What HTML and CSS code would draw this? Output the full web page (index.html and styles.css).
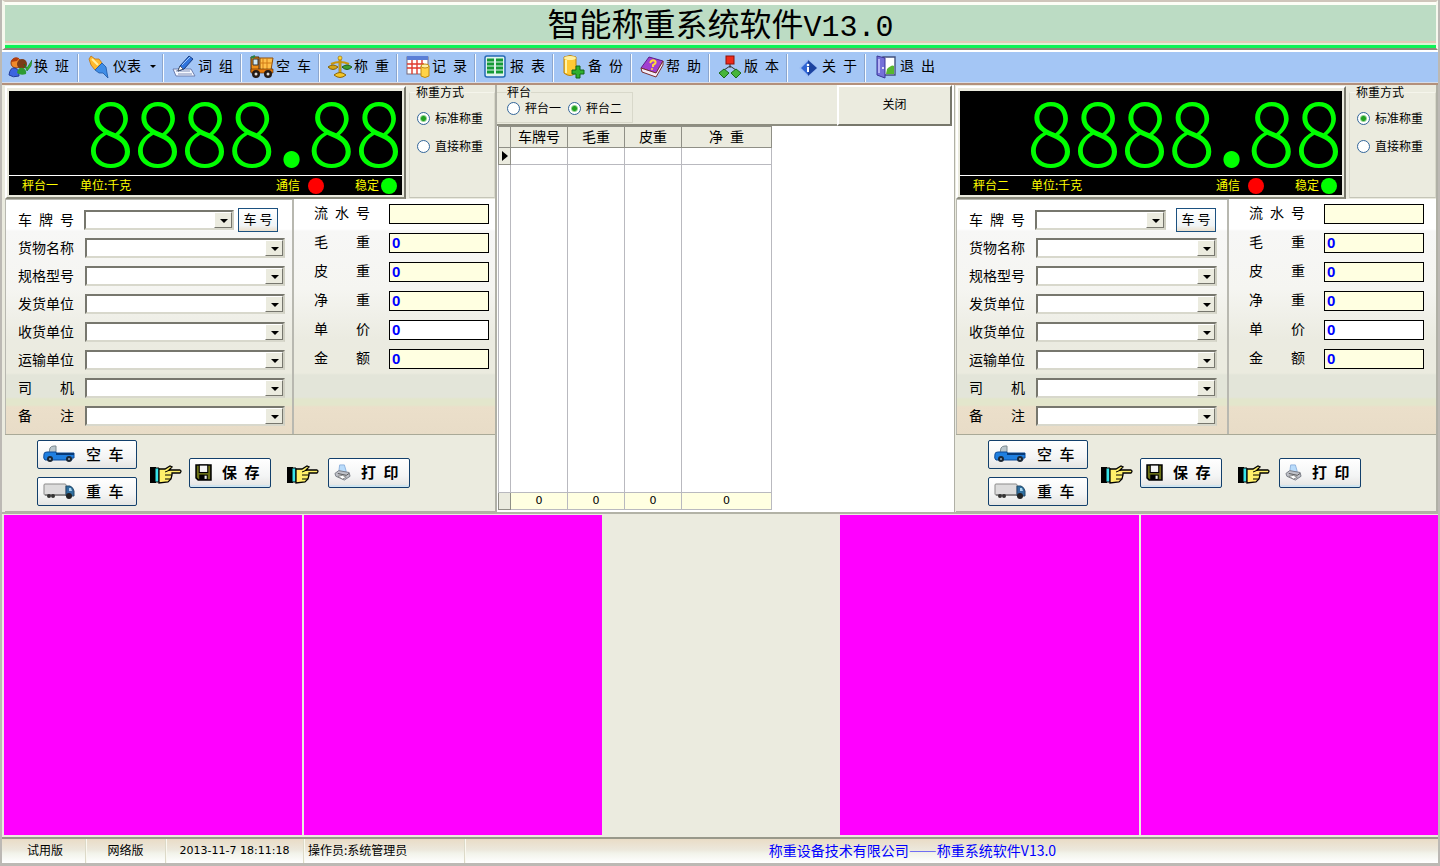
FILE: index.html
```html
<!DOCTYPE html>
<html lang="zh-CN">
<head>
<meta charset="utf-8">
<title>智能称重系统软件V13.0</title>
<link rel="stylesheet" href="styles.css">
</head>
<body>
<svg class="defs" aria-hidden="true">
  <symbol id="pickup" viewBox="0 0 32 18">
    <path d="M6 8L7 3Q8 1 11 1H13V9H6z" fill="#b9c6cc" stroke="#7d8a90"/>
    <path d="M1 9Q1 7 4 7H13V8H31V13H29V15H2Q0 14 1 9z" fill="#1f7fe0" stroke="#0d4a98"/>
    <path d="M13 9H31" stroke="#073a78" stroke-width="2"/>
    <circle cx="7" cy="14" r="3" fill="#1c2733"/><circle cx="7" cy="14" r="1" fill="#9ab"/>
    <circle cx="26" cy="14" r="3" fill="#1c2733"/><circle cx="26" cy="14" r="1" fill="#9ab"/>
  </symbol>
  <symbol id="truck" viewBox="0 0 32 18">
    <rect x="1" y="2" width="22" height="11" rx="1" fill="#dcdcdc" stroke="#8b8b8b"/>
    <path d="M2 12H23V14H2z" fill="#8a8a8a"/>
    <path d="M23 4H27Q30 5 31 9V14H23z" fill="#2f6fa0" stroke="#244a68"/>
    <path d="M26 6H28L29 9H26z" fill="#a9d6ee"/>
    <circle cx="6" cy="14" r="2" fill="#333"/><circle cx="10" cy="14" r="2" fill="#333"/><circle cx="26" cy="14" r="3" fill="#222"/>
  </symbol>
  <symbol id="hand" viewBox="0 0 34 24">
    <path d="M1 6H7V22H1z" fill="#000"/>
    <path d="M6 7H10V21H6z" fill="#38e4ea" stroke="#000"/>
    <path d="M10 8L16 8L21 5L23 6L20 9H31Q33 10 31 12H23L23 14L22 18L19 21L10 22z" fill="#fff06a" stroke="#000" stroke-width="1.3"/>
    <path d="M16 11L21 9M16 14H23M16 18H22" fill="none" stroke="#000"/>
  </symbol>
  <symbol id="disk" viewBox="0 0 16 16">
    <path d="M1 1H15V15H3L1 13z" fill="#6d7217" stroke="#000" stroke-width="1.5"/>
    <rect x="4" y="1" width="8" height="7" fill="#f4f4f4" stroke="#000"/>
    <rect x="4" y="10" width="8" height="5" fill="#000"/><rect x="9" y="11" width="2" height="3" fill="#eee"/>
  </symbol>
  <symbol id="printer" viewBox="0 0 18 18">
    <path d="M5 9L6 1H11L13 8z" fill="#b9dcfb" stroke="#8db1dd"/>
    <path d="M1 10L5 7L16 9L17 13L11 17L2 13z" fill="#bfc1c8" stroke="#777b85"/>
    <path d="M4 10L13 12L16 10" fill="none" stroke="#555"/>
    <path d="M4 13L9 12L13 14L9 16z" fill="#fff" stroke="#888"/>
  </symbol>
</svg>

<header class="banner"><h1>智能称重系统软件<span>V13.0</span></h1></header>

<nav class="toolbar">
  <button class="tool first"><svg viewBox="0 0 24 24"><circle cx="8" cy="8" r="5" fill="#f08a2c" stroke="#9c3f0c"/><path d="M3 7Q5 1 11 3L9 6z" fill="#b23c10"/><circle cx="14" cy="9" r="5" fill="#7a3c19"/><path d="M1 20Q2 12 7 13Q11 14 11 21Q5 23 1 20z" fill="#3c65e0" stroke="#223c9a"/><path d="M9 18Q10 12 15 13Q19 15 18 19Q13 21 9 18z" fill="#2f9b32"/><path d="M16 9L19 13L24 5L23 11L19 16z" fill="#35b52e" stroke="#136d15" stroke-width=".6"/></svg><span>换&ensp;班</span></button>
  <button class="tool wide"><svg viewBox="0 0 24 24"><path d="M2 4L4 1L8 4L12 4L15 8L8 15L4 10z" fill="#ffb92b" stroke="#bd7210" stroke-width=".8"/><path d="M15 8L8 15L12 18L16 18L21 23L20 18L19 12z" fill="#3f8de6" stroke="#1c56a3" stroke-width=".8"/><path d="M5 4L11 10" stroke="#fff0a0" stroke-width="2"/></svg><span>仪表</span><i class="drop"></i></button>
  <button class="tool"><svg viewBox="0 0 24 24"><path d="M1 14H19L23 21H4z" fill="#f5f8ff" stroke="#6d7fae"/><path d="M4 16H18M6 19H20" stroke="#7f8fb8"/><path d="M6 16L8 11L17 1L21 4L12 14z" fill="#2f74dd" stroke="#153b83"/><path d="M6 16L8 11L11 14z" fill="#fff" stroke="#333" stroke-width=".6"/><path d="M10 10L18 2" stroke="#9cc9ff"/></svg><span>词&ensp;组</span></button>
  <button class="tool"><svg viewBox="0 0 24 24"><path d="M1 2H9V17H1z" fill="#ef8d16" stroke="#4a2400"/><path d="M3 4H8V10H3z" fill="#cfe6f0" stroke="#333"/><path d="M1 3L5 1" stroke="#27824a" stroke-width="2"/><path d="M10 3H23L21 15H10z" fill="#ffc04a" stroke="#8d4b08"/><path d="M13 3V14M17 3V14M10 8H22" stroke="#d07b17"/><path d="M1 14H23V18H1z" fill="#e87d0c" stroke="#4a2400" stroke-width=".6"/><circle cx="6" cy="19" r="4" fill="#251b16"/><circle cx="6" cy="19" r="1.5" fill="#ddd"/><circle cx="18" cy="19" r="4" fill="#251b16"/><circle cx="18" cy="19" r="1.5" fill="#ddd"/></svg><span>空&ensp;车</span></button>
  <button class="tool"><svg viewBox="0 0 24 24"><path d="M11 2H13V18H11z" fill="#e9b514" stroke="#8d6706" stroke-width=".7"/><circle cx="12" cy="3" r="2" fill="#ffd735" stroke="#8d6706" stroke-width=".6"/><path d="M3 9Q12 5 21 9" fill="none" stroke="#c8950b" stroke-width="2"/><path d="M0 12Q5 8 10 12Q5 17 0 12z" fill="#d7a514" stroke="#80620d"/><path d="M14 12Q19 8 24 12Q19 17 14 12z" fill="#3f9c2e" stroke="#1e5d18"/><path d="M6 20Q12 15 18 20Q12 25 6 20z" fill="#f4c526" stroke="#8d6706"/></svg><span>称&ensp;重</span></button>
  <button class="tool"><svg viewBox="0 0 24 24"><rect x="1" y="2" width="21" height="17" fill="#fff" stroke="#7a6a78"/><rect x="1" y="1" width="21" height="4" fill="#5a7ed6"/><path d="M1 9H18M1 13H18M6 5V19M11 5V19M16 5V19" stroke="#e03a2e" stroke-width="1.4"/><path d="M15 11H23V21Q19 24 15 21z" fill="#ffd348" stroke="#c28a10"/><ellipse cx="19" cy="11" rx="4" ry="2" fill="#fff0a6" stroke="#c28a10"/></svg><span>记&ensp;录</span></button>
  <button class="tool"><svg viewBox="0 0 24 24"><rect x="1" y="1" width="20" height="21" rx="2" fill="#dff3ee" stroke="#2469b4" stroke-width="1.5"/><path d="M3 5H10M3 9H10M3 13H10M3 17H10M12 5H19M12 9H19M12 13H19M12 17H19" stroke="#149a35" stroke-width="2.8"/></svg><span>报&ensp;表</span></button>
  <button class="tool"><svg viewBox="0 0 24 24"><path d="M2 2Q8 -1 14 2V18Q8 23 2 18z" fill="#ffc934" stroke="#b9800c"/><ellipse cx="8" cy="3" rx="6" ry="2" fill="#fff0a0"/><path d="M4 5V18" stroke="#fff3a8" stroke-width="2"/><path d="M14 11H18V15H22V19H18V23H14V19H10V15H14z" fill="#2fb02e" stroke="#126716"/></svg><span>备&ensp;份</span></button>
  <button class="tool"><svg viewBox="0 0 24 24"><path d="M9 2L23 6L16 18L1 13z" fill="#a13fd0" stroke="#5c1d86"/><path d="M1 13L16 18L23 6V10L16 22L2 17z" fill="#f3edf8" stroke="#7a2e2e"/><path d="M10 8Q12 4 15 6Q17 8 13 10V12" fill="none" stroke="#ffd93a" stroke-width="2"/><circle cx="12" cy="14" r="1" fill="#ffd93a"/></svg><span>帮&ensp;助</span></button>
  <button class="tool"><svg viewBox="0 0 24 24"><path d="M12 9V13M12 11L6 15M12 11L18 15" stroke="#333"/><rect x="8" y="1" width="8" height="8" fill="#ee2a1b" stroke="#8d110b"/><path d="M1 18L6 14L11 18L6 23z" fill="#46b53a" stroke="#1c6a18"/><path d="M13 18L18 14L23 18L18 23z" fill="#46b53a" stroke="#1c6a18"/></svg><span>版&ensp;本</span></button>
  <button class="tool"><svg viewBox="0 0 24 24"><path d="M4 13L12 5L21 13L12 21z" fill="#2f65d4" stroke="#9dbdf3" stroke-width="1.5"/><path d="M12 5L21 13L12 21z" fill="#1b429f"/><circle cx="12" cy="10" r="1.3" fill="#fff"/><path d="M12 12V17" stroke="#fff" stroke-width="2"/></svg><span>关&ensp;于</span></button>
  <button class="tool last"><svg viewBox="0 0 24 24"><path d="M9 2H21V20H9z" fill="#fff" stroke="#40507d" stroke-width="1.4"/><path d="M13 14Q18 9 20 11V19H12z" fill="#57b82e"/><path d="M3 1L11 3V23L3 20z" fill="#7570d8" stroke="#3b3697"/><path d="M5 4V18" stroke="#b6b4f5" stroke-width="2"/><circle cx="9" cy="13" r="1" fill="#fff"/></svg><span>退&ensp;出</span></button>
</nav>

<main class="work">
  <section class="station one">
    <div class="top">
      <div class="display">
        <div class="digits">8888<b>.</b>88</div>
        <div class="strip"><span>秤台一</span><span>单位:千克</span><span class="comm">通信</span><i class="lamp red"></i><span class="stable">稳定</span><i class="lamp"></i></div>
      </div>
      <fieldset class="mode"><legend>称重方式</legend>
        <label><input type="radio" name="mode1" checked>标准称重</label>
        <label><input type="radio" name="mode1">直接称重</label>
      </fieldset>
    </div>
    <div class="form">
      <div class="fields">
        <div class="row plate"><label for="a1">车 牌 号</label><span class="combo"><select id="a1"></select></span><button class="mini">车 号</button></div>
        <div class="row"><label for="a2">货物名称</label><span class="combo"><select id="a2"></select></span></div>
        <div class="row"><label for="a3">规格型号</label><span class="combo"><select id="a3"></select></span></div>
        <div class="row"><label for="a4">发货单位</label><span class="combo"><select id="a4"></select></span></div>
        <div class="row"><label for="a5">收货单位</label><span class="combo"><select id="a5"></select></span></div>
        <div class="row"><label for="a6">运输单位</label><span class="combo"><select id="a6"></select></span></div>
        <div class="row"><label for="a7">司 机</label><span class="combo"><select id="a7"></select></span></div>
        <div class="row"><label for="a8">备 注</label><span class="combo"><select id="a8"></select></span></div>
      </div>
      <div class="values">
        <div class="row"><label for="v1">流 水 号</label><input id="v1" type="text"></div>
        <div class="row"><label for="v2">毛 重</label><input id="v2" type="text" value="0"></div>
        <div class="row"><label for="v3">皮 重</label><input id="v3" type="text" value="0"></div>
        <div class="row"><label for="v4">净 重</label><input id="v4" type="text" value="0"></div>
        <div class="row"><label for="v5">单 价</label><input id="v5" class="plain" type="text" value="0"></div>
        <div class="row"><label for="v6">金 额</label><input id="v6" type="text" value="0"></div>
      </div>
    </div>
    <div class="actions">
      <div class="trucks">
        <button class="btn"><svg class="car"><use href="#pickup"/></svg>空&ensp;车</button>
        <button class="btn"><svg class="car"><use href="#truck"/></svg>重&ensp;车</button>
      </div>
      <svg class="hand"><use href="#hand"/></svg>
      <button class="btn bold"><svg class="ico"><use href="#disk"/></svg>保&ensp;存</button>
      <svg class="hand second"><use href="#hand"/></svg>
      <button class="btn bold"><svg class="ico"><use href="#printer"/></svg>打&ensp;印</button>
    </div>
  </section>

  <section class="list">
    <div class="listbar">
      <fieldset class="pick"><legend>秤台</legend>
        <label><input type="radio" name="scale">秤台一</label>
        <label><input type="radio" name="scale" checked>秤台二</label>
      </fieldset>
      <button class="close">关闭</button>
    </div>
    <div class="sheet">
      <table>
        <colgroup><col class="mark"><col class="narrow"><col class="narrow"><col class="narrow"><col class="net"></colgroup>
        <thead><tr><th></th><th>车牌号</th><th>毛重</th><th>皮重</th><th>净&ensp;重</th></tr></thead>
        <tbody>
          <tr class="current"><th><i class="pointer"></i></th><td></td><td></td><td></td><td></td></tr>
          <tr class="rest"><td></td><td></td><td></td><td></td><td></td></tr>
        </tbody>
        <tfoot><tr><th></th><td>0</td><td>0</td><td>0</td><td>0</td></tr></tfoot>
      </table>
    </div>
  </section>

  <section class="station two">
    <div class="top">
      <div class="display">
        <div class="digits">8888<b>.</b>88</div>
        <div class="strip"><span>秤台二</span><span>单位:千克</span><span class="comm">通信</span><i class="lamp red"></i><span class="stable">稳定</span><i class="lamp"></i></div>
      </div>
      <fieldset class="mode"><legend>称重方式</legend>
        <label><input type="radio" name="mode2" checked>标准称重</label>
        <label><input type="radio" name="mode2">直接称重</label>
      </fieldset>
    </div>
    <div class="form">
      <div class="fields">
        <div class="row plate"><label for="b1">车 牌 号</label><span class="combo"><select id="b1"></select></span><button class="mini">车 号</button></div>
        <div class="row"><label for="b2">货物名称</label><span class="combo"><select id="b2"></select></span></div>
        <div class="row"><label for="b3">规格型号</label><span class="combo"><select id="b3"></select></span></div>
        <div class="row"><label for="b4">发货单位</label><span class="combo"><select id="b4"></select></span></div>
        <div class="row"><label for="b5">收货单位</label><span class="combo"><select id="b5"></select></span></div>
        <div class="row"><label for="b6">运输单位</label><span class="combo"><select id="b6"></select></span></div>
        <div class="row"><label for="b7">司 机</label><span class="combo"><select id="b7"></select></span></div>
        <div class="row"><label for="b8">备 注</label><span class="combo"><select id="b8"></select></span></div>
      </div>
      <div class="values">
        <div class="row"><label for="w1">流 水 号</label><input id="w1" type="text"></div>
        <div class="row"><label for="w2">毛 重</label><input id="w2" type="text" value="0"></div>
        <div class="row"><label for="w3">皮 重</label><input id="w3" type="text" value="0"></div>
        <div class="row"><label for="w4">净 重</label><input id="w4" type="text" value="0"></div>
        <div class="row"><label for="w5">单 价</label><input id="w5" class="plain" type="text" value="0"></div>
        <div class="row"><label for="w6">金 额</label><input id="w6" type="text" value="0"></div>
      </div>
    </div>
    <div class="actions">
      <div class="trucks">
        <button class="btn"><svg class="car"><use href="#pickup"/></svg>空&ensp;车</button>
        <button class="btn"><svg class="car"><use href="#truck"/></svg>重&ensp;车</button>
      </div>
      <svg class="hand"><use href="#hand"/></svg>
      <button class="btn bold"><svg class="ico"><use href="#disk"/></svg>保&ensp;存</button>
      <svg class="hand second"><use href="#hand"/></svg>
      <button class="btn bold"><svg class="ico"><use href="#printer"/></svg>打&ensp;印</button>
    </div>
  </section>
</main>

<section class="cameras">
  <div class="video"></div><div class="video"></div><div class="gap"></div><div class="video"></div><div class="video"></div>
</section>

<footer class="status">
  <span class="s1">试用版</span><span class="s2">网络版</span><span class="s3">2013-11-7 18:11:18</span><span class="s4">操作员:系统管理员</span><span class="s5">称重设备技术有限公司——称重系统软件V13.0</span>
</footer>
</body>
</html>
```
FILE: styles.css
```css
* { box-sizing: border-box; }
body {
  margin: 0;
  min-height: 100vh;
  display: flex;
  flex-direction: column;
  background: #ebebdf;
  border: solid #bcb9b4;
  border-width: 0 2px 3px 2px;
  font: 14px/20px "Noto Sans CJK SC", sans-serif;
  color: #000;
}
button, input, select { font: inherit; color: inherit; margin: 0; padding: 0; border-radius: 0; }
fieldset { margin: 0; padding: 0; min-width: 0; }
.defs { display: none; }

.banner {
  height: 50px;
  border-top: 2px solid #cfc6bb;
  border-bottom: 2px solid #8c8878;
  background: linear-gradient(#fdfef6 3px, #bcdcc4 3px, #bcdcc4 39px, #e3c9b8 39px, #e3c9b8 41px, #d9f5d4 41px, #d9f5d4 43px, #0df356 43px);
  border-left: 3px solid #f6f8ee;
  border-right: 2px solid #f6f8ee;
  flex: none;
}
.banner h1 {
  margin: 0;
  font-size: 32px;
  line-height: 40px;
  font-weight: 400;
  text-align: center;
}
.banner h1 span { font-family: "Liberation Mono", monospace; font-size: 30px; }

.toolbar {
  display: flex;
  height: 35px;
  flex: none;
  padding: 2px 0 0 1px;
  background: #a4c6f5;
  border-top: 2px solid #fff;
  border-bottom: 2px solid #b3907b;
  box-shadow: inset 0 -1px #d5dcea;
}
.tool {
  display: flex;
  align-items: center;
  width: 78px;
  height: 28px;
  padding: 0 0 3px 8px;
  border: 0;
  border-right: 1px solid #f7fbff;
  box-shadow: inset -1px 0 #8ca6cd;
  background: none;
  white-space: nowrap;
}
.tool span { padding-bottom: 4px; }
.tool svg { width: 24px; height: 24px; margin-right: 2px; flex: none; }
.tool.first { width: 76px; padding-left: 5px; }
.tool.wide { width: 85px; }
.tool.last { border: 0; box-shadow: none; }
.drop { border: 3px solid transparent; border-top-color: #000; border-bottom: 0; margin-left: 9px; }

.work { display: grid; grid-template-columns: minmax(0, 495fr) minmax(0, 457fr) minmax(0, 484fr); }
.station { padding-left: 3px; border-right: 2px solid #b0b0a6; display: flex; flex-direction: column; }
.station.two { border-left: 1px solid #b0b0a6; padding-left: 1px; }
.top { display: flex; height: 114px; }
.display {
  flex: 1;
  padding: 3px 2px 2px;
  margin-top: 1px;
  margin-right: 3px;
  border: 2px solid;
  border-color: #fff #77776b #8b8b7d #fff;
}
.digits {
  height: 84px;
  background: #000;
  color: #0f0;
  font: 300 88px/76px "Noto Sans CJK SC", sans-serif;
  text-align: right;
}
.digits b { font-weight: 700; padding: 0 2px; }
.strip {
  display: flex;
  align-items: center;
  height: 20px;
  padding: 0 5px 0 13px;
  background: #000;
  border-top: 1px solid #fff;
  color: #ff0;
  font-size: 12px;
  line-height: 18px;
  white-space: nowrap;
}
.strip span { padding-bottom: 1px; }
.strip span + span { margin-left: 22px; }
.strip .comm { margin-left: auto; }
.lamp { width: 16px; height: 16px; border-radius: 50%; background: #0f0; margin-left: 2px; }
.lamp.red { background: #f00; margin-left: 8px; }
.strip .stable { margin-left: 31px; }

.mode, .pick { border: 1px solid #d8d8ca; font-size: 12px; }
.mode { width: 86px; height: 113px; padding: 5px 0 0 7px; border-color: #f5f5ec #d8d8ca #c5c5b8; }
.two .mode { width: 87px; }
.mode legend, .pick legend { line-height: 14px; padding: 0; }
.mode legend { margin-left: -1px; }
.mode label, .pick label { display: flex; align-items: center; gap: 5px; white-space: nowrap; }
.mode label { height: 28px; }
input[type="radio"] {
  appearance: none;
  width: 13px;
  height: 13px;
  flex: none;
  border: 1px solid #33669a;
  border-radius: 50%;
  background: #fff;
}
input[type="radio"]:checked { background: radial-gradient(circle, #21a121 2px, #fff 4px); }

.form {
  display: grid;
  grid-template-columns: 289px minmax(0, 1fr);
  height: 236px;
  border-bottom: 1px solid #a9a997;
  background: linear-gradient(#fff 30px, #f7f7f6 32px, #f5f5f1 90px, #ebebe1 140px, #ebebdf 174px, #e3e5d9 176px, #e3e5d9 198px, #e3e6cc 200px, #e3e6cc 206px, #ebdfca 208px, #e8dcc7);
}
.two .form { grid-template-columns: 273px minmax(0, 1fr); }
.fields { border: 1px solid #b8b8b0; border-width: 1px 2px 0 1px; padding: 6px 0 0 12px; }
.row { display: flex; align-items: center; }
.row label { width: 56px; flex: none; padding-bottom: 2px; text-align-last: justify; white-space: nowrap; }
.fields .row { height: 28px; }
.combo {
  display: flex;
  width: 200px;
  height: 20px;
  margin-left: 11px;
  background: #fff;
  border: 2px solid;
  border-color: #77776e #cfcfc2 #d8d8cc #77776e;
  position: relative;
}
.combo select { appearance: none; flex: 1; min-width: 0; border: 0; background: none; padding-left: 3px; }
.combo::before {
  content: "";
  position: absolute;
  right: 0;
  top: 0;
  bottom: 0;
  width: 16px;
  background: #ebebdf;
  border: 1px solid;
  border-color: #fff #77776e #77776e #fff;
  pointer-events: none;
}
.combo::after {
  content: "";
  position: absolute;
  right: 4px;
  top: 7px;
  border: 4px solid transparent;
  border-top-color: #000;
  border-bottom: 0;
  pointer-events: none;
}
.plate .combo { width: 150px; margin-left: 10px; }
.two .combo { width: 181px; }
.two .plate .combo { width: 131px; }
.mini {
  width: 40px;
  height: 24px;
  margin-left: 4px;
  border: 1px solid #1c5180;
  background: linear-gradient(#fff, #f0f4f6 75%, #eadfcd);
  padding: 0 0 2px;
  font-size: 13px;
  line-height: 20px;
  white-space: nowrap;
}
.two .mini { margin-left: 10px; }
.values { padding-left: 20px; }
.values .row { height: 29px; }
.values label { padding-bottom: 4px; }
.values input {
  width: 100px;
  height: 20px;
  margin-left: 19px;
  padding-left: 2px;
  border: 1px solid #000;
  background: #ffffe1;
  color: #00f;
  font: bold 15px/18px "Liberation Sans", sans-serif;
}
.values input.plain { background: #fff; }

.actions {
  display: flex;
  align-items: center;
  height: 77px;
  padding: 0 0 1px 32px;
  border-bottom: 1px solid #b0b0a2;
}
.trucks { display: grid; gap: 8px; margin-right: 12px; }
.btn {
  display: flex;
  align-items: center;
  width: 82px;
  height: 30px;
  padding: 0 0 1px 5px;
  border: 1px solid #123f6b;
  border-radius: 2px;
  background: linear-gradient(#fff, #f4f5f5 60%, #e4e4e2);
  font-size: 15px;
  font-weight: 500;
  white-space: nowrap;
}
.trucks .btn { width: 100px; height: 29px; }
.bold { font-weight: 700; box-shadow: inset 0 -2px #cfe4ef; }
.car { width: 32px; height: 18px; margin-right: 11px; }
.ico { width: 17px; height: 17px; margin-right: 10px; }
.hand { width: 34px; height: 24px; margin-right: 6px; }
.hand.second { margin: 0 8px 0 15px; }

.list { display: flex; flex-direction: column; background: #fff; }
.listbar {
  display: flex;
  justify-content: space-between;
  height: 41px;
  margin-right: 2px;
  background: #ebebdf;
  border-bottom: 2px solid #8d8d80;
}
.pick {
  display: flex;
  gap: 7px;
  width: 136px;
  padding: 1px 0 0 10px;
  border-left: 0;
  height: 38px;
}
.pick label { height: 16px; gap: 5px; }
.close {
  width: 115px;
  height: 41px;
  background: #ebebdf;
  border: 2px solid;
  border-color: #fff #77776b #77776b #fff;
  font-size: 12px;
  padding-bottom: 3px;
}
.sheet { flex: 1; display: flex; }
table { width: 273px; border-collapse: collapse; table-layout: fixed; margin-left: 1px; margin-bottom: 2px; }
col.mark { width: 12px; }
col.narrow { width: 57px; }
col.net { width: 90px; }
th, td { border: 1px solid #b9b9bf; padding: 0; font-weight: 400; text-align: center; height: 17px; line-height: 16px; }
thead th { background: #ebebdf; height: 21px; padding-bottom: 2px; border-color: #8f8f86; }
tbody th, tfoot th { background: #ebebdf; border-color: #8f8f86; }
tbody .rest td { height: auto; }
tfoot td { background: #ffffe1; font: 11px/16px "DejaVu Sans", sans-serif; }
.pointer { display: block; width: 0; border: 5px solid transparent; border-left: 6px solid #000; border-right: 0; margin-left: 3px; }

.cameras {
  flex: 1;
  display: grid;
  grid-template-columns: minmax(0, 299fr) minmax(0, 298fr) minmax(0, 235fr) minmax(0, 299fr) minmax(0, 298fr);
  gap: 2px;
  padding: 1px 0 2px 2px;
  border-top: 2px solid #b2b2a6;
}
.video { background: #f0f; }

.status {
  display: flex;
  height: 26px;
  flex: none;
  border-top: 2px solid #98988a;
  background: linear-gradient(#e9dcc6, #ece8dc 45%, #f2f3ea 60%, #fff);
  font: 12px/22px "Noto Sans CJK SC", sans-serif;
  white-space: nowrap;
  text-align: center;
  padding-left: 3px;
}
.status span { border-right: 1px solid #dcdac8; box-shadow: 1px 0 #faf9f0; }
.s1 { width: 81px; }
.s2 { width: 80px; }
.status .s3 { width: 138px; font: 11px/24px "DejaVu Sans", sans-serif; }
.s4 { width: 161px; text-align: left; padding-left: 4px; }
.status .s5 { flex: 1; font: 14px/22px "Noto Sans CJK SC", sans-serif; color: #00f; padding-right: 78px; border: 0; box-shadow: none; }
```
